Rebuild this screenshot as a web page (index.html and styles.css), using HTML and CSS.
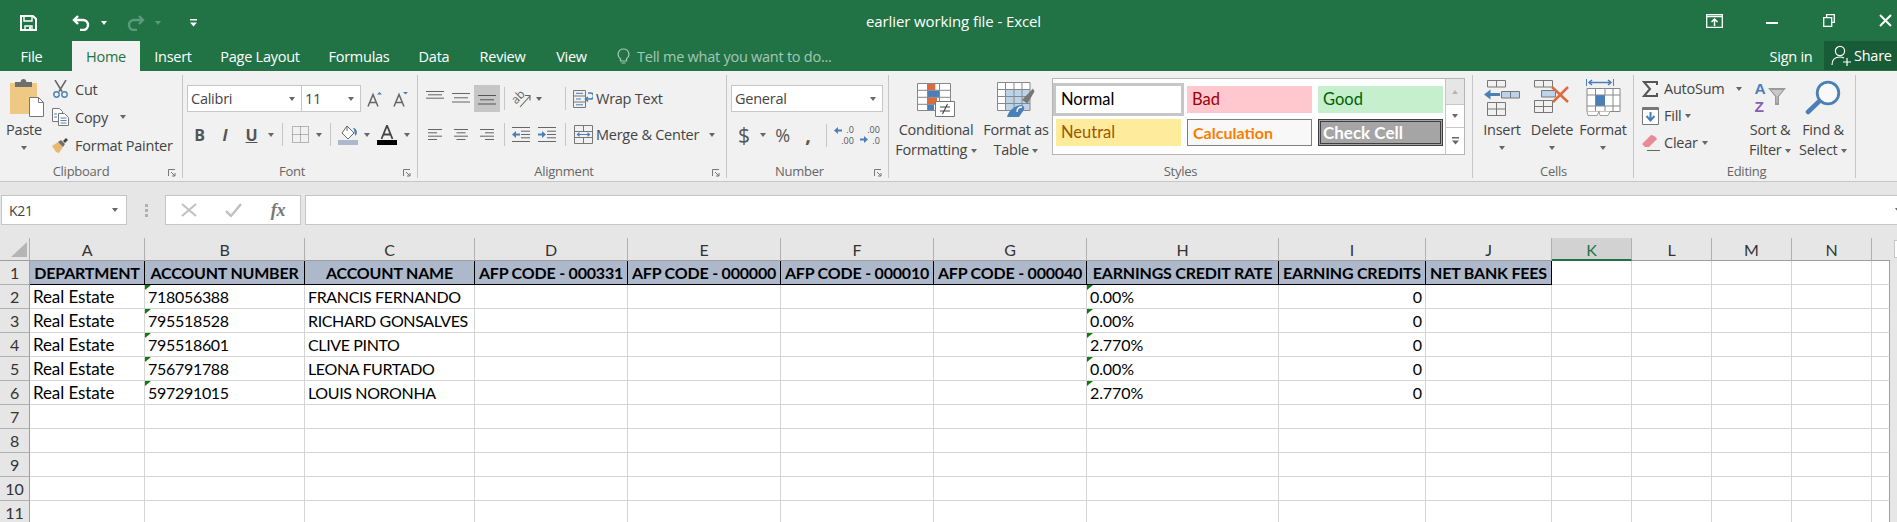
FILE: index.html
```html
<!DOCTYPE html>
<html>
<head>
  <title>earlier working file - Excel</title>
  <link rel="stylesheet" href="styles.css">
</head>
<body>

<div class="titlebar">
  <div class="qat">
    <span class="qat-save"><svg width="17" height="16" viewBox="0 0 17 16"><path d="M1 1h12l3 3v11H1z" fill="none" stroke="#fff" stroke-width="2"/><path d="M4 1h8v5H4zM5 11h7v4H5z" fill="none" stroke="#fff" stroke-width="1.4"/><path d="M9 12h2v3H9z" fill="#fff"/></svg></span>
    <span class="qat-undo"><svg width="19" height="16" viewBox="0 0 19 16"><path d="M6 1L2 5l4 4" fill="none" stroke="#fff" stroke-width="2.4"/><path d="M2 5h9a5 5 0 0 1 0 10H8" fill="none" stroke="#fff" stroke-width="2.4"/></svg></span>
    <span class="qat-caret"><i class="caret white"></i></span>
    <span class="qat-redo"><svg width="19" height="16" viewBox="0 0 19 16"><path d="M13 1l4 4-4 4" fill="none" stroke="#5d9a7b" stroke-width="2.4"/><path d="M17 5H8a5 5 0 0 0 0 10h3" fill="none" stroke="#5d9a7b" stroke-width="2.4"/></svg></span>
    <span class="qat-caret"><i class="caret faded"></i></span>
    <span class="qat-custom"><svg width="7" height="8" viewBox="0 0 7 8"><path d="M0 0h7v1.4H0zM0 3.4h7L3.5 7.6z" fill="#fff"/></svg></span>
  </div>
  <div class="doc-title">earlier working file - Excel</div>
  <div class="win-btns">
    <span class="win-btn"><svg width="17" height="14" viewBox="0 0 17 14"><path d="M.7.7h15.6v12.6H.7z" fill="none" stroke="#fff" stroke-width="1.3"/><path d="M1 2.5h15" stroke="#fff" stroke-width="1.5"/><path d="M8.5 12V5.5M5.5 8l3-3 3 3" fill="none" stroke="#fff" stroke-width="1.5"/></svg></span>
    <span class="win-btn"><svg width="12" height="14" viewBox="0 0 12 14"><path d="M0 8h12v2H0z" fill="#fff"/></svg></span>
    <span class="win-btn"><svg width="12" height="13" viewBox="0 0 12 13"><path d="M3.6 3V.7h7.700v7.6H9" fill="none" stroke="#fff" stroke-width="1.3"/><path d="M.7 3.700h8v8.600h-8z" fill="none" stroke="#fff" stroke-width="1.3"/></svg></span>
    <span class="win-btn last"><svg width="13" height="13" viewBox="0 0 13 13"><path d="M1 1l11 11M12 1L1 12" stroke="#fff" stroke-width="2"/></svg></span>
  </div>
</div>

<div class="tabs">
  <div class="tab file">File</div>
  <div class="tab active">Home</div>
  <div class="tab">Insert</div>
  <div class="tab">Page Layout</div>
  <div class="tab">Formulas</div>
  <div class="tab">Data</div>
  <div class="tab">Review</div>
  <div class="tab">View</div>
  <div class="tellme">
    <svg width="13" height="17" viewBox="0 0 13 17"><path d="M6.500 1a5.300 5.300 0 0 0-3 9.700V13h6v-2.300a5.300 5.300 0 0 0-3-9.700zM4.500 15h4" fill="none" stroke="#a6c7b5" stroke-width="1.200"/></svg>
    <span>Tell me what you want to do...</span>
  </div>
  <div class="tab signin">Sign in</div>
  <div class="share">
    <svg width="22" height="21" viewBox="0 0 22 21"><circle cx="9" cy="6" r="4.600" fill="none" stroke="#fff" stroke-width="1.200"/><path d="M1 20c0-5 3-8 8-8 1.500 0 3 .4 4 1M12 17h8M16 13v8" fill="none" stroke="#fff" stroke-width="1.200"/></svg>
    <span>Share</span>
  </div>
</div>

<div class="ribbon">

  <div class="group g-clipboard">
    <div class="content flex">
      <div class="big paste">
        <div class="big-icon">
          <svg width="36" height="38" viewBox="0 0 36 38"><path d="M1 4h27v31H1z" fill="#efc883"/><path d="M6 3h5.500c.5-2 1-3 3-3s2.500 1 3 3H23v5H6z" fill="#6f6f6f"/><path d="M20.500 18.500h9l5 5v14h-14z" fill="#fff" stroke="#777"/><path d="M29.500 18.500v5h5" fill="none" stroke="#777"/></svg>
        </div>
        <div class="big-label">Paste</div>
        <i class="caret"></i>
      </div>
      <div class="small-col">
        <div class="small"><span class="slot"><svg width="17" height="18" viewBox="0 0 17 18"><path d="M3 0l7 11.500M14 0L7 11.500" stroke="#666" stroke-width="1.500"/><circle cx="4.500" cy="14.500" r="2.700" fill="none" stroke="#4a7fb8" stroke-width="1.400"/><circle cx="12.500" cy="14.500" r="2.700" fill="none" stroke="#4a7fb8" stroke-width="1.400"/></svg></span>Cut</div>
        <div class="small"><span class="slot"><svg width="17" height="18" viewBox="0 0 17 18"><path d="M.5.500h7l3 3v10H.500z" fill="#fff" stroke="#777"/><path d="M6.500 5.500h6l4 4v8h-10z" fill="#fff" stroke="#777"/><path d="M2 6h3M2 9h3M8.500 10h6M8.500 12.500h6M8.500 15h6" stroke="#4a7fb8"/></svg></span>Copy<i class="caret copy-caret"></i></div>
        <div class="small"><span class="slot"><svg width="17" height="15" viewBox="0 0 17 15"><path d="M0 8l6-4 5 5-4 6-3-1z" fill="#e9b96e"/><path d="M6 4l5 5 2-3-4-4z" fill="#6f6f6f"/><path d="M11 3l3-3 2 2-3 3z" fill="#444"/></svg></span>Format Painter</div>
      </div>
    </div>
    <div class="group-label with-launcher">Clipboard</div>
    <svg class="launcher" width="8" height="8" viewBox="0 0 8 8"><path d="M.5 7V.5H7M3 3l4 4M4 7h3V4" fill="none" stroke="#777"/></svg>
  </div>

  <div class="group g-font">
    <div class="content rows">
      <div class="row font-top">
        <div class="select font-name"><span>Calibri</span><i class="caret"></i></div>
        <div class="select font-size"><span>11</span><i class="caret"></i></div>
        <svg width="16" height="16" viewBox="0 0 16 16"><path d="M1 15.500L6 3.500l5 12M2.800 11.500h6.400" fill="none" stroke="#666" stroke-width="1.500"/><path d="M10 3.500L12.500 1 15 3.500z" fill="#4a7fb8"/></svg>
        <svg width="16" height="16" viewBox="0 0 16 16"><path d="M1 15.500L6 3.500l5 12M2.800 11.500h6.400" fill="none" stroke="#666" stroke-width="1.500"/><path d="M10 1l2.500 2.500L15 1z" fill="#4a7fb8"/></svg>
      </div>
      <div class="row font-bottom">
        <b class="fmt">B</b>
        <i class="fmt">I</i>
        <u class="fmt">U</u>
        <i class="caret"></i>
        <span class="sep"></span>
        <svg width="17" height="17" viewBox="0 0 17 17"><path d="M.5.500h16v16H.500zM8.500.5v16M.5 8.500h16" fill="none" stroke="#777" stroke-dasharray="1 1"/></svg>
        <i class="caret"></i>
        <span class="sep"></span>
        <svg width="20" height="20" viewBox="0 0 20 20"><path d="M9 1l7 7-6 6-6-6z" fill="#fff" stroke="#666"/><path d="M9 1v5" stroke="#666"/><path d="M15 3c2.500 0 4 2 4 5l-1.500 3-1-3c0-2-.5-3.500-1.500-5z" fill="#4a7fb8"/><path d="M0 15h20v5H0z" fill="#adb9ca"/></svg>
        <i class="caret"></i>
        <svg width="20" height="20" viewBox="0 0 20 20"><path d="M4.500 14L10 0.500 15.500 14M6.500 9.500h7" fill="none" stroke="#444" stroke-width="1.800"/><path d="M0 15h20v5H0z" fill="#000"/></svg>
        <i class="caret"></i>
      </div>
    </div>
    <div class="group-label with-launcher">Font</div>
    <svg class="launcher" width="8" height="8" viewBox="0 0 8 8"><path d="M.5 7V.5H7M3 3l4 4M4 7h3V4" fill="none" stroke="#777"/></svg>
  </div>

  <div class="group g-align">
    <div class="content rows">
      <div class="row align-top">
        <svg class="v-top" width="18" height="8" viewBox="0 0 18 8"><path d="M0 .5h18M2 3.800h14M0 7.200h18" stroke="#666"/></svg>
        <svg class="v-mid" width="18" height="10" viewBox="0 0 18 10"><path d="M0 .5h18M2 4.800h14M0 9h18" stroke="#666"/></svg>
        <span class="pressed"><svg width="18" height="10" viewBox="0 0 18 10"><path d="M0 .5h18M2 4.800h14M0 9h18" stroke="#555"/></svg></span>
        <span class="sep"></span>
        <div class="orient-icon">
          <span class="orient">ab</span>
          <svg width="20" height="18" viewBox="0 0 20 18"><path d="M9 17L19 6M14 5.500h5v5" fill="none" stroke="#666" stroke-width="1.100"/></svg>
        </div>
        <i class="caret"></i>
        <span></span>
        <span class="sep"></span>
        <svg width="20" height="18" viewBox="0 0 20 18"><path d="M.5.500h12v17H.500zM.5 6h12M.5 12h12" fill="none" stroke="#777"/><path d="M3 3.300h7M3 9h5M3 14.800h7" stroke="#4a7fb8"/><path d="M15 3h2.500a1.800 1.800 0 0 1 0 6H13m2-2L12.500 9l2.500 2.500" fill="none" stroke="#4a7fb8" stroke-width="1.600"/></svg>
        <span class="cmd">Wrap Text</span>
      </div>
      <div class="row align-bottom">
        <svg width="14" height="11" viewBox="0 0 14 11"><path d="M0 .5h14M0 3.800h9M0 7.200h14M0 10.500h9" stroke="#666"/></svg>
        <svg width="14" height="11" viewBox="0 0 14 11"><path d="M0 .5h14M2.500 3.800h9M0 7.200h14M2.500 10.500h9" stroke="#666"/></svg>
        <svg width="14" height="11" viewBox="0 0 14 11"><path d="M0 .5h14M5 3.800h9M0 7.200h14M5 10.500h9" stroke="#666"/></svg>
        <span class="sep"></span>
        <svg width="18" height="15" viewBox="0 0 18 15"><path d="M0 .5h18M9 4.200h9M9 7.500h9M9 10.800h9M0 14.500h18" stroke="#666"/><path d="M0 7.500l4-3.500v2.500h4v2H4V11z" fill="#4a7fb8"/></svg>
        <svg width="18" height="15" viewBox="0 0 18 15"><path d="M0 .5h18M9 4.200h9M9 7.500h9M9 10.800h9M0 14.500h18" stroke="#666"/><path d="M8 7.500L4 4v2.500H0v2h4V11z" fill="#4a7fb8"/></svg>
        <span class="sep"></span>
        <svg width="19" height="19" viewBox="0 0 19 19"><path d="M.5.500h18v18H.500zM.5 6.500h18M.5 12.500h18M9.500.5v6M9.500 12.500v6" fill="none" stroke="#777"/><path d="M3.500 9.500h12M5.500 7.800L3.500 9.500l2 1.700M13.500 7.800l2 1.700-2 1.700" fill="none" stroke="#4a7fb8" stroke-width="1.200"/></svg>
        <span class="cmd">Merge &amp; Center</span>
        <i class="caret"></i>
      </div>
    </div>
    <div class="group-label with-launcher">Alignment</div>
    <svg class="launcher" width="8" height="8" viewBox="0 0 8 8"><path d="M.5 7V.5H7M3 3l4 4M4 7h3V4" fill="none" stroke="#777"/></svg>
  </div>

  <div class="group g-number">
    <div class="content rows">
      <div class="row number-top">
        <div class="select number-format"><span>General</span><i class="caret"></i></div>
      </div>
      <div class="row number-bottom">
        <span class="sym dollar">$</span>
        <i class="caret"></i>
        <span class="sym">%</span>
        <span class="sym comma">,</span>
        <span class="sep"></span>
        <div class="dec-icon">
          <svg width="9" height="18" viewBox="0 0 9 18"><path d="M0 4.500l4-3.500v2.500h4v2H4V8z" fill="#4a7fb8"/></svg>
          <div class="dec right"><span>.0</span><span>.00</span></div>
        </div>
        <div class="dec-icon">
          <svg width="9" height="18" viewBox="0 0 9 18"><path d="M8 13.500L4 10v2.500H0v2h4V17z" fill="#4a7fb8"/></svg>
          <div class="dec right"><span>.00</span><span>.0</span></div>
        </div>
      </div>
    </div>
    <div class="group-label with-launcher">Number</div>
    <svg class="launcher" width="8" height="8" viewBox="0 0 8 8"><path d="M.5 7V.5H7M3 3l4 4M4 7h3V4" fill="none" stroke="#777"/></svg>
  </div>

  <div class="group g-styles">
    <div class="content flex">
      <div class="big cond">
        <div class="big-icon">
          <svg width="38" height="34" viewBox="0 0 38 34"><path d="M.5.500h33v27H.500z" fill="#fff" stroke="#888"/><path d="M10.700 1h7.600v6h-7.600z" fill="#dd6b3e"/><path d="M10.700 7.500h12v6.500h-12z" fill="#4a7fb8"/><path d="M10.700 14.500H20v6.500h-9.300z" fill="#dd6b3e"/><path d="M10.700 21.500H17V27h-6.300z" fill="#4a7fb8"/><path d="M.5 7.300h33M.5 14.300h33M.5 21.300h33M10.500.5v27M22.500.5v27" fill="none" stroke="#888"/><path d="M18.500 18.500h19v15h-19z" fill="#fff" stroke="#777"/><path d="M23 24h10M23 28h10M30.500 21l-5 10" stroke="#444" stroke-width="1.100"/></svg>
        </div>
        <div class="big-label">Conditional</div>
        <div class="big-label">Formatting <i class="caret"></i></div>
      </div>
      <div class="big fmt-table">
        <div class="big-icon">
          <svg width="38" height="36" viewBox="0 0 38 36"><path d="M.5.500h32.500v28H.500z" fill="#fff"/><path d="M8.500 7.500H33v21H8.500z" fill="#bdd3ea"/><path d="M.5.500h32.500v28H.500zM8.500.5v28M17 .5v28M25 .5v28M.5 7.500H33M.5 14.500H33M.5 21.500H33" fill="none" stroke="#888"/><path d="M25 18L36 6.500l1.500 3-7 12z" fill="#777"/><path d="M10 35c1-5 6-11 14-12 3 .5 4 3 2.500 5.500L22 35z" fill="#4a7fb8"/><path d="M20 30c0-3 2-5 5-5" fill="none" stroke="#fff" stroke-width="1.300"/></svg>
        </div>
        <div class="big-label">Format as</div>
        <div class="big-label">Table <i class="caret"></i></div>
      </div>
      <div class="gallery">
        <div class="gallery-cells">
          <div class="cs normal">Normal</div>
          <div class="cs bad">Bad</div>
          <div class="cs good">Good</div>
          <div class="cs neutral">Neutral</div>
          <div class="cs calc">Calculation</div>
          <div class="cs check">Check Cell</div>
        </div>
        <div class="gallery-scroll">
          <span class="disabled"><i class="caret up"></i></span>
          <span><i class="caret"></i></span>
          <span><svg width="7" height="8" viewBox="0 0 7 8"><path d="M0 0h7v1.400H0zM0 3.400h7L3.500 7.600z" fill="#666"/></svg></span>
        </div>
      </div>
    </div>
    <div class="group-label">Styles</div>
  </div>

  <div class="group g-cells">
    <div class="content flex">
      <div class="big cell-insert">
        <div class="big-icon">
          <svg width="36" height="36" viewBox="0 0 36 36"><path d="M3.500.5h18v6.500h-18zM12.500.5V7M3.500 22.500h18v13h-18zM3.500 29h18M12.500 22.500v13" fill="none" stroke="#777"/><path d="M17.500 11.500h18v6.500h-18z" fill="#bdd3ea" stroke="#777"/><path d="M26.500 11.500V18" stroke="#777"/><path d="M0 14.500l6.500-5v3.500h9.500v3H6.500v3.500z" fill="#4a7fb8"/></svg>
        </div>
        <div class="big-label">Insert</div>
        <i class="caret"></i>
      </div>
      <div class="big cell-delete">
        <div class="big-icon">
          <svg width="36" height="34" viewBox="0 0 36 34"><path d="M.5.500h18v6.500H.5zM9.500.5V7M.5 20.500h18v12H.5zM.5 26.500h18M9.500 20.500v12" fill="none" stroke="#777"/><path d="M7.500 10.500h14v6.500h-14z" fill="#bdd3ea" stroke="#777"/><path d="M18 7l16 15M34 7L19 22" stroke="#dd6b3e" stroke-width="2.500"/></svg>
        </div>
        <div class="big-label">Delete</div>
        <i class="caret"></i>
      </div>
      <div class="big cell-format">
        <div class="big-icon">
          <svg width="35" height="38" viewBox="0 0 35 38"><path d="M.5 0v7M27.500 0v7" stroke="#4a7fb8"/><path d="M3 3.500h22M6 1L3 3.500 6 6M22 1l3 2.500L22 6" fill="none" stroke="#4a7fb8" stroke-width="1.500"/><path d="M1 9.500h33v23H1z" fill="#fff"/><path d="M9.500 16h9.500v11H9.500z" fill="#4a7fb8"/><path d="M1 9.500h33v23H1zM9.500 9.500v23M19 9.500v6.500M19 27v5.500M27 9.500v23M1 16h33M1 27h33" fill="none" stroke="#888"/><path d="M1 32.500l1 4h9l2-4M13 32.500l1 4h8l2-4" fill="#fff" stroke="#888" stroke-width=".8"/></svg>
        </div>
        <div class="big-label">Format</div>
        <i class="caret"></i>
      </div>
    </div>
    <div class="group-label">Cells</div>
  </div>

  <div class="group g-editing">
    <div class="content flex">
      <div class="edit-col">
        <div class="small"><span class="slot"><svg width="16" height="16" viewBox="0 0 16 16"><path d="M15 4V1H2l6 7-6 7h13v-3" fill="none" stroke="#555" stroke-width="2"/></svg></span>AutoSum<i class="caret auto-caret"></i></div>
        <div class="small"><span class="slot"><svg width="17" height="18" viewBox="0 0 17 18"><path d="M.5.500h16v17H.5z" fill="#fff" stroke="#777"/><path d="M1 1h15v2H1z" fill="#777"/><path d="M8.500 5v8M4.500 9l4 4.500 4-4.500" fill="none" stroke="#4a7fb8" stroke-width="2"/></svg></span>Fill<i class="caret text-caret"></i></div>
        <div class="small"><span class="slot"><svg width="18" height="17" viewBox="0 0 18 17"><path d="M0 10L9 1c2 0 5 2 6 4l-8 8H3z" fill="#e88a98"/><path d="M5 16.500h13" stroke="#666"/></svg></span>Clear<i class="caret text-caret"></i></div>
      </div>
      <div class="big edit-sort">
        <div class="big-icon sort-icon">
          <div class="az"><span class="az-a">A</span><span class="az-z">Z</span></div>
          <svg width="18" height="17" viewBox="0 0 18 17"><path d="M0 0h18l-7 8.500V17H7V8.500z" fill="#9a9a9a"/><path d="M3 2h12l-5.500 6.500V15H8.500V8.500z" fill="#c8c8c8"/></svg>
        </div>
        <div class="big-label">Sort &amp;</div>
        <div class="big-label">Filter <i class="caret"></i></div>
      </div>
      <div class="big edit-find">
        <div class="big-icon">
          <svg width="36" height="35" viewBox="0 0 36 35"><circle cx="23" cy="13" r="10.800" fill="#fff" fill-opacity=".6" stroke="#4a7fb8" stroke-width="2.800"/><path d="M14 21.500L3 32" stroke="#4a7fb8" stroke-width="4.500" stroke-linecap="round"/></svg>
        </div>
        <div class="big-label">Find &amp;</div>
        <div class="big-label">Select <i class="caret"></i></div>
      </div>
    </div>
    <div class="group-label">Editing</div>
  </div>

</div>

<div class="formula-bar">
  <div class="name-box"><span>K21</span><i class="caret"></i></div>
  <div class="dots"><i></i><i></i><i></i></div>
  <div class="fx-box">
    <svg width="16" height="14" viewBox="0 0 16 14"><path d="M1 1l14 12M15 1L1 13" stroke="#c0c0c0" stroke-width="2"/></svg>
    <svg width="17" height="14" viewBox="0 0 17 14"><path d="M1 8l5 5L16 1" fill="none" stroke="#c0c0c0" stroke-width="2.400"/></svg>
    <span class="fx">fx</span>
  </div>
  <div class="formula-input"><i class="caret"></i></div>
</div>

<div class="sheet">
  <div class="corner"><span class="triangle"></span></div>
  <div class="col-h">A</div><div class="col-h">B</div><div class="col-h">C</div><div class="col-h">D</div><div class="col-h">E</div><div class="col-h">F</div><div class="col-h">G</div><div class="col-h">H</div><div class="col-h">I</div><div class="col-h">J</div><div class="col-h on">K</div><div class="col-h">L</div><div class="col-h">M</div><div class="col-h">N</div><div class="col-h blank"></div>

  <div class="row-h">1</div>
  <div class="c hd">DEPARTMENT</div><div class="c hd">ACCOUNT NUMBER</div><div class="c hd">ACCOUNT NAME</div><div class="c hd">AFP CODE - 000331</div><div class="c hd">AFP CODE - 000000</div><div class="c hd">AFP CODE - 000010</div><div class="c hd">AFP CODE - 000040</div><div class="c hd">EARNINGS CREDIT RATE</div><div class="c hd">EARNING CREDITS</div><div class="c hd">NET BANK FEES</div><div class="c"></div><div class="c"></div><div class="c"></div><div class="c"></div><div class="c"></div>

  <div class="row-h">2</div>
  <div class="c dept">Real Estate</div><div class="c err acct">718056388</div><div class="c name">FRANCIS FERNANDO</div><div class="c"></div><div class="c"></div><div class="c"></div><div class="c"></div><div class="c err">0.00%</div><div class="c num">0</div><div class="c"></div><div class="c"></div><div class="c"></div><div class="c"></div><div class="c"></div><div class="c"></div>

  <div class="row-h">3</div>
  <div class="c dept">Real Estate</div><div class="c err acct">795518528</div><div class="c name">RICHARD GONSALVES</div><div class="c"></div><div class="c"></div><div class="c"></div><div class="c"></div><div class="c err">0.00%</div><div class="c num">0</div><div class="c"></div><div class="c"></div><div class="c"></div><div class="c"></div><div class="c"></div><div class="c"></div>

  <div class="row-h">4</div>
  <div class="c dept">Real Estate</div><div class="c err acct">795518601</div><div class="c name">CLIVE PINTO</div><div class="c"></div><div class="c"></div><div class="c"></div><div class="c"></div><div class="c err">2.770%</div><div class="c num">0</div><div class="c"></div><div class="c"></div><div class="c"></div><div class="c"></div><div class="c"></div><div class="c"></div>

  <div class="row-h">5</div>
  <div class="c dept">Real Estate</div><div class="c err acct">756791788</div><div class="c name">LEONA FURTADO</div><div class="c"></div><div class="c"></div><div class="c"></div><div class="c"></div><div class="c err">0.00%</div><div class="c num">0</div><div class="c"></div><div class="c"></div><div class="c"></div><div class="c"></div><div class="c"></div><div class="c"></div>

  <div class="row-h">6</div>
  <div class="c dept">Real Estate</div><div class="c err acct">597291015</div><div class="c name">LOUIS NORONHA</div><div class="c"></div><div class="c"></div><div class="c"></div><div class="c"></div><div class="c err">2.770%</div><div class="c num">0</div><div class="c"></div><div class="c"></div><div class="c"></div><div class="c"></div><div class="c"></div><div class="c"></div>

  <div class="row-h">7</div>
  <div class="c"></div><div class="c"></div><div class="c"></div><div class="c"></div><div class="c"></div><div class="c"></div><div class="c"></div><div class="c"></div><div class="c"></div><div class="c"></div><div class="c"></div><div class="c"></div><div class="c"></div><div class="c"></div><div class="c"></div>

  <div class="row-h">8</div>
  <div class="c"></div><div class="c"></div><div class="c"></div><div class="c"></div><div class="c"></div><div class="c"></div><div class="c"></div><div class="c"></div><div class="c"></div><div class="c"></div><div class="c"></div><div class="c"></div><div class="c"></div><div class="c"></div><div class="c"></div>

  <div class="row-h">9</div>
  <div class="c"></div><div class="c"></div><div class="c"></div><div class="c"></div><div class="c"></div><div class="c"></div><div class="c"></div><div class="c"></div><div class="c"></div><div class="c"></div><div class="c"></div><div class="c"></div><div class="c"></div><div class="c"></div><div class="c"></div>

  <div class="row-h">10</div>
  <div class="c"></div><div class="c"></div><div class="c"></div><div class="c"></div><div class="c"></div><div class="c"></div><div class="c"></div><div class="c"></div><div class="c"></div><div class="c"></div><div class="c"></div><div class="c"></div><div class="c"></div><div class="c"></div><div class="c"></div>

  <div class="row-h">11</div>
  <div class="c"></div><div class="c"></div><div class="c"></div><div class="c"></div><div class="c"></div><div class="c"></div><div class="c"></div><div class="c"></div><div class="c"></div><div class="c"></div><div class="c"></div><div class="c"></div><div class="c"></div><div class="c"></div><div class="c"></div>
</div>
<div class="scroll-stub"></div>

</body>
</html>
```

FILE: styles.css
```css
html, body {
  margin: 0;
  padding: 0;
  height: 100%;
  overflow: hidden;
}
body {
  font-family: "Open Sans", "Noto Sans", sans-serif;
  font-size: 14.5px;
  letter-spacing: -0.25px;
  color: #444;
  background: #e6e6e6;
}

/* caret used all over the ribbon */
.caret {
  display: inline-block;
  width: 0;
  height: 0;
  border-left: 3.5px solid transparent;
  border-right: 3.5px solid transparent;
  border-top: 4px solid #666;
  vertical-align: middle;
}
.caret.white { border-top-color: #fff; }
.caret.faded { border-top-color: #5d9a7b; }
.caret.up {
  border-top: 0;
  border-bottom: 4px solid #b5b5b5;
}

/* title bar */
.titlebar {
  height: 41px;
  background: #217346;
  color: #fff;
  display: grid;
  grid-template-columns: 1fr auto 1fr;
  align-items: center;
}
.qat { display: flex; align-items: center; padding-top: 4px; }
.qat span { display: flex; justify-content: center; align-items: center; }
.qat-save { width: 56px; }
.qat-undo, .qat-redo { width: 34px; margin-left: 8px; }
.qat-caret { width: 12px; }
.qat-custom { width: 12px; margin-left: 23px; }
.doc-title { padding-left: 10px; font-size: 15px; letter-spacing: -0.1px; }
.win-btns { display: flex; justify-content: flex-end; }
.win-btn { width: 57px; display: flex; justify-content: center; align-items: center; }
.win-btn.last { width: 40px; padding-left: 17px; box-sizing: border-box; }

/* tab strip */
.tabs {
  height: 30px;
  background: #217346;
  color: #fff;
  display: grid;
  grid-template-columns: 72px 68px 66px 108px 90px 60px 77px 61px 1fr 60px 73px;
  align-items: stretch;
}
.tab { display: flex; align-items: center; justify-content: center; }
.tab.file { padding-right: 9px; }
.tab.active { background: #f1f1f1; color: #217346; }
.tab.signin { padding-right: 6px; }
.tellme {
  display: flex;
  align-items: center;
  gap: 7px;
  padding-left: 15px;
  color: #a6c7b5;
}
.share {
  background: #185c37;
  display: flex;
  align-items: center;
  gap: 1px;
  padding-left: 7px;
  margin-bottom: 1px;
}

/* ribbon */
.ribbon {
  height: 111px;
  box-sizing: border-box;
  background: #f1f1f1;
  border-bottom: 1px solid #c6c6c6;
  padding-top: 4px;
  display: flex;
  align-items: flex-start;
}
.group {
  height: 103px;
  box-sizing: border-box;
  border-right: 1px solid #c6c6c6;
  display: flex;
  flex-direction: column;
  position: relative;
  flex: none;
}
.g-clipboard { width: 183px; }
.g-font { width: 235px; padding-left: 4px; }
.g-align { width: 309px; padding-left: 4px; }
.g-number { width: 162px; padding-left: 4px; }
.g-styles { width: 584px; }
.g-cells { width: 161px; padding-left: 1px; }
.g-editing { width: 222px; padding-left: 4px; }

.content { flex: 1; min-height: 0; }
.flex { display: flex; }
.group-label {
  height: 13px;
  line-height: 13px;
  font-size: 13px;
  text-align: center;
  color: #666;
}
.with-launcher { padding-right: 20px; }
.launcher { position: absolute; right: 6px; bottom: 1px; }

.big {
  display: flex;
  flex-direction: column;
  align-items: center;
  padding-top: 5px;
  white-space: nowrap;
  flex: none;
}
.big-icon {
  height: 40px;
  display: flex;
  align-items: flex-start;
  justify-content: center;
}
.big-label { height: 20px; line-height: 20px; }
.big > .caret { margin-top: 6px; }

.paste { width: 48px; }
.paste svg { margin-left: 6px; margin-top: -1px; }
.small-col { margin-left: 4px; display: grid; grid-auto-rows: 28px; }
.small { display: flex; align-items: center; white-space: nowrap; }
.slot { width: 23px; display: flex; align-items: center; }
.copy-caret { margin-left: 12px; }

.rows {
  padding-top: 10px;
  display: flex;
  flex-direction: column;
  gap: 9px;
}
.row { height: 27px; display: grid; align-items: center; justify-items: center; }
.sep { width: 1px; height: 23px; background: #c6c6c6; }

.select {
  background: #fff;
  border: 1px solid #c6c6c6;
  box-sizing: border-box;
  height: 27px;
  display: flex;
  align-items: center;
  justify-content: space-between;
  padding: 0 6px 0 3px;
  justify-self: stretch;
}
.font-top { grid-template-columns: 114px 60px 28px 24px; }
.font-name { border-right: 0; }
.font-size { padding-left: 3px; }
.font-bottom { grid-template-columns: 25px 26px 27px 12px 11px 24px 14px 8px 28px 10px 30px 10px; }
.fmt {
  font-family: "Open Sans", sans-serif;
  font-size: 16px;
  color: #555;
  font-weight: bold;
  line-height: 1;
}

.align-top { grid-template-columns: 26px 26px 26px 8px 26px 10px 16px 10px 26px auto; justify-content: start; }
.align-bottom { grid-template-columns: 26px 26px 26px 8px 26px 26px 10px 26px auto 26px; justify-content: start; }
.v-top { margin-top: -8px; }
.v-mid { margin-top: -1px; }
.pressed {
  width: 26px;
  height: 27px;
  background: #c6c6c6;
  display: flex;
  align-items: center;
  justify-content: center;
  padding-top: 3px;
  box-sizing: border-box;
}
.orient-icon { position: relative; width: 20px; height: 18px; }
.orient {
  position: absolute;
  left: 0;
  top: 0;
  font-size: 12px;
  line-height: 14px;
  letter-spacing: 0;
  color: #666;
  transform: rotate(-45deg);
}
.cmd { white-space: nowrap; justify-self: start; }

.number-top { display: block; }
.number-format { width: 152px; }
.number-bottom { grid-template-columns: 26px 12px 27px 24px 13px 22px 30px; justify-content: start; }
.sym { font-size: 18px; color: #555; }
.dollar { font-size: 21px; }
.comma { font-weight: bold; font-size: 20px; line-height: 14px; }
.dec-icon { display: flex; align-items: center; }
.dec {
  display: flex;
  flex-direction: column;
  align-items: flex-end;
  font-size: 9px;
  line-height: 12px;
  letter-spacing: 0;
  color: #555;
  margin-left: -2px;
}
.dec span { height: 11px; }

/* style gallery */
.cond { width: 94px; }
.cond svg { margin-top: 3px; }
.fmt-table { width: 66px; }
.fmt-table svg { margin-top: 2px; }
.gallery {
  margin: 3px 0 0 3px;
  width: 413px;
  height: 77px;
  box-sizing: border-box;
  background: #fff;
  border: 1px solid #b5b5b5;
  display: flex;
}
.gallery-cells {
  flex: 1;
  display: grid;
  grid-template-columns: 125px 125px 125px;
  grid-template-rows: 27px 27px;
  gap: 6px;
  padding: 7px 0 0 3px;
}
.cs {
  font-family: Lato, "Liberation Sans", sans-serif;
  font-size: 16.5px;
  letter-spacing: 0;
  line-height: 27px;
  padding-left: 5px;
  box-sizing: border-box;
}
.normal { color: #000; box-shadow: 0 0 0 3px #c6c6c6; }
.bad { background: #ffc7ce; color: #9c0006; }
.good { background: #c6efce; color: #006100; }
.neutral { background: #ffeb9c; color: #9c5700; }
.calc {
  background: #f8f8f8;
  border: 1px solid #7f7f7f;
  color: #fa7d00;
  font-weight: bold;
  font-size: 16px;
  line-height: 25px;
  padding-left: 5px;
}
.check {
  background: #a5a5a5;
  border: 3px double #3f3f3f;
  color: #fff;
  font-weight: bold;
  font-size: 17px;
  line-height: 21px;
  padding-left: 2px;
}
.gallery-scroll {
  width: 18px;
  border-left: 1px solid #c6c6c6;
  display: grid;
  grid-template-rows: 26px 23px 1fr;
}
.gallery-scroll span {
  display: flex;
  align-items: center;
  justify-content: center;
  border-bottom: 1px solid #c6c6c6;
}
.gallery-scroll span:last-child { border-bottom: 0; }
.gallery-scroll .disabled { background: #e6e6e6; }

.cell-insert { width: 56px; }
.cell-delete { width: 44px; }
.cell-format { width: 58px; }
.cell-format svg { margin-top: -1px; }

.edit-col { width: 108px; display: grid; grid-auto-rows: 27px; }
.edit-col .slot { width: 26px; padding-left: 4px; box-sizing: border-box; }
.auto-caret { margin-left: 12px; }
.text-caret { margin-left: 4px; }
.edit-sort { width: 48px; }
.sort-icon { gap: 2px; }
.sort-icon svg { margin-top: 8px; }
.edit-find { width: 58px; }
.az {
  display: flex;
  flex-direction: column;
  font-family: "Liberation Sans", sans-serif;
  font-weight: bold;
  font-size: 15.5px;
  letter-spacing: 0;
  line-height: 18px;
}
.az span { height: 18px; }
.az-a { color: #4a7fb8; }
.az-z { color: #8a5cb5; }

/* formula bar */
.formula-bar {
  margin-top: 13px;
  height: 30px;
  display: flex;
  align-items: stretch;
}
.name-box {
  margin-left: 1px;
  width: 126px;
  box-sizing: border-box;
  background: #fff;
  border: 1px solid #c6c6c6;
  display: flex;
  align-items: center;
  justify-content: space-between;
  padding: 0 8px 0 7px;
  font-size: 14px;
}
.dots {
  width: 38px;
  display: flex;
  flex-direction: column;
  align-items: center;
  justify-content: center;
  gap: 2px;
}
.dots i { width: 3px; height: 3px; background: #b0b0b0; }
.fx-box {
  width: 136px;
  box-sizing: border-box;
  background: #fff;
  border: 1px solid #c6c6c6;
  display: grid;
  grid-template-columns: 45px 45px 44px;
  align-items: center;
  justify-items: center;
}
.fx {
  font-family: "Liberation Serif", serif;
  font-style: italic;
  font-weight: bold;
  font-size: 18px;
  color: #777;
}
.formula-input {
  margin-left: 4px;
  flex: 1;
  background: #fff;
  border: 1px solid #c6c6c6;
  border-right: 0;
  display: flex;
  align-items: center;
  justify-content: flex-end;
}
.formula-input .caret { margin-right: -4px; }

/* sheet */
.sheet {
  margin-top: 13px;
  display: grid;
  grid-template-columns: 30px 115px 160px 170px 153px 153px 153px 153px 192px 147px 126px 80px 80px 80px 80px 18px;
  grid-template-rows: 23px;
  grid-auto-rows: 24px;
  font-family: Lato, "Liberation Sans", sans-serif;
  font-size: 16px;
  letter-spacing: -0.1px;
  color: #000;
}
.corner {
  border-right: 1px solid #b0b0b0;
  border-bottom: 1px solid #9e9e9e;
  display: flex;
  align-items: center;
  justify-content: flex-end;
  padding-right: 2px;
}
.triangle {
  width: 0;
  height: 0;
  border-left: 16px solid transparent;
  border-bottom: 15px solid #b5b5b5;
}
.col-h {
  border-right: 1px solid #b0b0b0;
  border-bottom: 1px solid #9e9e9e;
  text-align: center;
  line-height: 23px;
  color: #333;
  box-sizing: border-box;
}
.col-h.on {
  background: #d2d2d2;
  color: #217346;
  border-bottom: 2px solid #217346;
}
.col-h.blank { border-right: 0; }
.row-h {
  border-right: 1px solid #9e9e9e;
  border-bottom: 1px solid #b0b0b0;
  box-sizing: border-box;
  background: #e6e6e6;
  text-align: center;
  line-height: 24px;
  color: #333;
}
.c {
  background: #fff;
  border-right: 1px solid #d4d4d4;
  border-bottom: 1px solid #d4d4d4;
  box-sizing: border-box;
  line-height: 24px;
  padding: 0 3px;
  white-space: nowrap;
  overflow: hidden;
  position: relative;
}
.c:nth-child(16n) {
  border-right: 1px solid #9e9e9e;
}
.c.hd {
  background: #adb9ca;
  font-weight: bold;
  text-align: center;
  border-right: 1px solid #000;
  border-bottom: 1px solid #000;
  padding: 0;
  letter-spacing: -0.2px;
}
.c.dept { font-size: 17px; }
.c.acct { letter-spacing: -0.3px; }
.c.name { letter-spacing: -0.37px; }
.c.num { text-align: right; }
.c.err::before {
  content: "";
  position: absolute;
  left: 0;
  top: 0;
  border-top: 5px solid #0a7d0a;
  border-right: 6px solid transparent;
}
.scroll-stub {
  position: absolute;
  left: 1894px;
  top: 240px;
  width: 4px;
  height: 18px;
  background: #fff;
  border: 1px solid #c6c6c6;
  box-sizing: border-box;
}
```
